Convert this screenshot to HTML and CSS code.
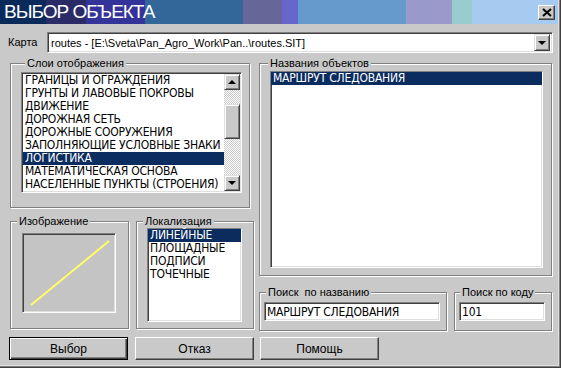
FILE: index.html
```html
<!DOCTYPE html>
<html lang="ru">
<head>
    <meta charset="UTF-8">
    <title>Выбор объекта</title>
    <link rel="stylesheet" href="styles.css">
</head>
<body>
    <div class="dialog">
        <div class="titlebar">
            <span class="title">ВЫБОР ОБЪЕКТА</span>
            <span class="close">
                <svg width="10" height="9" viewBox="0 0 10 9"><path d="M1 1 L9 8 M9 1 L1 8" stroke="#000" stroke-width="2"/></svg>
            </span>
        </div>

        <div class="map-row">
            <span class="map-label">Карта</span>
            <div class="combo">
                <span class="combo-text">routes - [E:\Sveta\Pan_Agro_Work\Pan..\routes.SIT]</span>
                <span class="drop-btn"><span class="arrow-down"></span></span>
            </div>
        </div>

        <div class="main">
            <div class="col-left">
                <fieldset class="group layers">
                    <legend>Слои отображения</legend>
                    <div class="listbox layers-list">
                        <ul class="items">
                            <li>ГРАНИЦЫ И ОГРАЖДЕНИЯ</li>
                            <li>ГРУНТЫ И ЛАВОВЫЕ ПОКРОВЫ</li>
                            <li>ДВИЖЕНИЕ</li>
                            <li>ДОРОЖНАЯ СЕТЬ</li>
                            <li>ДОРОЖНЫЕ СООРУЖЕНИЯ</li>
                            <li>ЗАПОЛНЯЮЩИЕ УСЛОВНЫЕ ЗНАКИ</li>
                            <li class="selected">ЛОГИСТИКА</li>
                            <li>МАТЕМАТИЧЕСКАЯ ОСНОВА</li>
                            <li>НАСЕЛЕННЫЕ ПУНКТЫ (СТРОЕНИЯ)</li>
                        </ul>
                        <div class="scrollbar">
                            <span class="sb-btn"><span class="arrow-up"></span></span>
                            <span class="sb-track">
                                <span class="sb-thumb"></span>
                            </span>
                            <span class="sb-btn"><span class="arrow-down"></span></span>
                        </div>
                    </div>
                </fieldset>

                <div class="row-bottom">
                    <fieldset class="group preview">
                        <legend>Изображение</legend>
                        <div class="picture">
                            <svg width="90" height="76" viewBox="0 0 90 76"><path d="M7 70 L85 6" stroke="#ffff66" stroke-width="2"/></svg>
                        </div>
                    </fieldset>
                    <fieldset class="group local">
                        <legend>Локализация</legend>
                        <ul class="listbox items local-list">
                            <li class="selected">ЛИНЕЙНЫЕ</li>
                            <li>ПЛОЩАДНЫЕ</li>
                            <li>ПОДПИСИ</li>
                            <li>ТОЧЕЧНЫЕ</li>
                        </ul>
                    </fieldset>
                </div>
            </div>

            <div class="col-right">
                <fieldset class="group names">
                    <legend>Названия объектов</legend>
                    <ul class="listbox items names-list">
                        <li class="selected">МАРШРУТ СЛЕДОВАНИЯ</li>
                    </ul>
                </fieldset>

                <div class="search-row">
                    <fieldset class="group search search-name">
                        <legend>Поиск&nbsp; по названию</legend>
                        <div class="field">МАРШРУТ СЛЕДОВАНИЯ</div>
                    </fieldset>
                    <fieldset class="group search search-code">
                        <legend>Поиск по коду</legend>
                        <div class="field">101</div>
                    </fieldset>
                </div>
            </div>
        </div>

        <div class="buttons">
            <button class="btn default">Выбор</button>
            <button class="btn">Отказ</button>
            <button class="btn">Помощь</button>
        </div>
    </div>
</body>
</html>
```

FILE: styles.css
```css
body {
    margin: 0;
    font-family: "Liberation Sans", Arial, sans-serif;
    font-size: 11px;
    color: #000;
}
.dialog {
    width: 561px;
    height: 368px;
    box-sizing: border-box;
    background: #c9c9c9;
    box-shadow: inset -1px -1px #404040, inset -2px -2px #808080, inset -3px -3px #dfdfdf;
    overflow: hidden;
}
.titlebar {
    height: 24px;
    margin-right: 3px;
    display: flex;
    align-items: center;
    background: linear-gradient(to right,
        #0b2a5c 0 46px, #2b2b68 46px 86px, #33339a 86px 145px,
        #336699 145px 243px, #666699 243px 282px, #6666cc 282px 298px,
        #6699cc 298px 406px, #9999cc 406px 452px, #99cccc 452px 472px,
        #a6caf0 472px);
}
.title {
    padding-left: 4px;
    color: #fff;
    font-size: 19px;
    letter-spacing: -1px;
    line-height: 24px;
}
.close {
    margin-left: auto;
    margin-right: 3px;
    width: 17px;
    height: 15px;
    box-sizing: border-box;
    background: #c9c9c9;
    border: 1px solid;
    border-color: #fff #404040 #404040 #fff;
    box-shadow: inset -1px -1px #808080;
    display: flex;
    align-items: center;
    justify-content: center;
}
.close svg {
    display: block;
}

.map-row {
    display: flex;
    align-items: center;
    margin-top: 8px;
    padding-left: 8px;
}
.map-label {
    width: 39px;
    margin-top: -2px;
}
.combo {
    width: 506px;
    height: 21px;
    box-sizing: border-box;
    background: #fff;
    border: 1px solid;
    border-color: #808080 #fff #fff #808080;
    box-shadow: inset 1px 1px #404040, inset -1px -1px #dfdfdf;
    display: flex;
    align-items: center;
    padding: 1px 2px 1px 3px;
}
.combo-text {
    flex: 1;
}
.drop-btn, .sb-btn {
    width: 16px;
    height: 16px;
    box-sizing: border-box;
    background: #c9c9c9;
    border: 1px solid;
    border-color: #dfdfdf #404040 #404040 #dfdfdf;
    box-shadow: inset 1px 1px #fff, inset -1px -1px #808080;
    display: flex;
    align-items: center;
    justify-content: center;
}
.drop-btn {
    height: 17px;
}
.arrow-down {
    border-left: 4px solid transparent;
    border-right: 4px solid transparent;
    border-top: 4px solid #000;
}
.arrow-up {
    border-left: 4px solid transparent;
    border-right: 4px solid transparent;
    border-bottom: 4px solid #000;
}

.main {
    display: flex;
    gap: 5px;
    margin-top: 3px;
    padding-left: 10px;
}
.col-left {
    width: 244px;
}
.col-right {
    width: 293px;
}

.group {
    margin: 0;
    min-width: 0;
    box-sizing: border-box;
    border: 1px solid #808080;
    box-shadow: inset 1px 1px #fff, 1px 1px #fff;
}
.group legend {
    padding: 0 2px;
    margin-left: -4px;
    line-height: 14px;
    background: #c9c9c9;
}

.layers {
    width: 240px;
    height: 152px;
    padding: 2px 7px 0 10px;
}
.layers legend {
    margin-left: 4px;
}
.listbox {
    box-sizing: border-box;
    background: #fff;
    border: 1px solid;
    border-color: #808080 #fff #fff #808080;
    box-shadow: inset 1px 1px #404040, inset -1px -1px #dfdfdf;
    padding: 1px;
}
.items, .field {
    font-family: "DejaVu Sans Condensed", "Liberation Sans Narrow", "Liberation Sans", sans-serif;
    font-stretch: condensed;
    font-size: 12px;
    letter-spacing: -0.2px;
}
.items {
    margin: 0;
    padding: 0;
    list-style: none;
}
.items li {
    height: 13px;
    line-height: 13px;
    padding-left: 2px;
    white-space: nowrap;
}
.items li.selected {
    background: #0a2c5e;
    color: #fff;
}
.layers-list {
    display: flex;
    width: 221px;
    height: 121px;
}
.layers-list .items {
    flex: 1;
}
.scrollbar {
    width: 16px;
    display: flex;
    flex-direction: column;
}
.sb-track {
    flex: 1;
    padding-top: 14px;
    background: repeating-conic-gradient(#fff 0 25%, #c9c9c9 0 50%) 0 0 / 2px 2px;
}
.sb-thumb {
    display: block;
    height: 35px;
    box-sizing: border-box;
    background: #c9c9c9;
    border: 1px solid;
    border-color: #dfdfdf #404040 #404040 #dfdfdf;
    box-shadow: inset 1px 1px #fff, inset -1px -1px #808080;
}

.row-bottom {
    display: flex;
    gap: 7px;
    margin-top: 6px;
}
.preview {
    width: 119px;
    height: 115px;
    padding: 5px 0 0 11px;
}
.preview legend {
    margin-left: -5px;
}
.picture {
    width: 94px;
    height: 80px;
    box-sizing: border-box;
    background: #c4c4c4;
    border: 1px solid;
    border-color: #808080 #fff #fff #808080;
    box-shadow: inset 1px 1px #404040, inset -1px -1px #dfdfdf;
    padding: 1px;
}
.picture svg {
    display: block;
}
.local {
    width: 118px;
    height: 115px;
    padding: 0 0 0 10px;
}
.local-list {
    width: 95px;
    height: 94px;
}

.names {
    width: 293px;
    height: 220px;
    padding: 1px 0 0 10px;
}
.names legend {
    margin-left: -2px;
}
.names-list {
    width: 273px;
    height: 197px;
}

.search-row {
    display: flex;
    gap: 7px;
    margin-top: 9px;
}
.search {
    height: 46px;
    padding: 3px 0 0 4px;
}
.search legend {
    margin-left: 2px;
}
.search-code legend {
    margin-left: 1px;
}
.search-name {
    width: 188px;
}
.search-code {
    width: 98px;
}
.field {
    height: 19px;
    box-sizing: border-box;
    background: #fff;
    border: 1px solid;
    border-color: #808080 #fff #fff #808080;
    box-shadow: inset 1px 1px #404040, inset -1px -1px #dfdfdf;
    padding: 2px 2px 0;
    line-height: 14px;
}
.search-name .field {
    width: 176px;
}
.search-code .field {
    width: 86px;
}

.buttons {
    display: flex;
    gap: 7px;
    margin-top: 6px;
    padding-left: 9px;
}
.btn {
    width: 119px;
    height: 23px;
    box-sizing: border-box;
    margin: 0;
    padding: 0;
    background: #c9c9c9;
    font-family: inherit;
    font-size: 12px;
    color: #000;
    border: 1px solid;
    border-color: #fff #404040 #404040 #fff;
    box-shadow: inset -1px -1px #808080;
}
.btn.default {
    border-color: #000;
    box-shadow: inset 1px 1px #fff, inset -1px -1px #404040, inset -2px -2px #808080;
}
.btn:last-child {
    margin-left: -1px;
}
```
